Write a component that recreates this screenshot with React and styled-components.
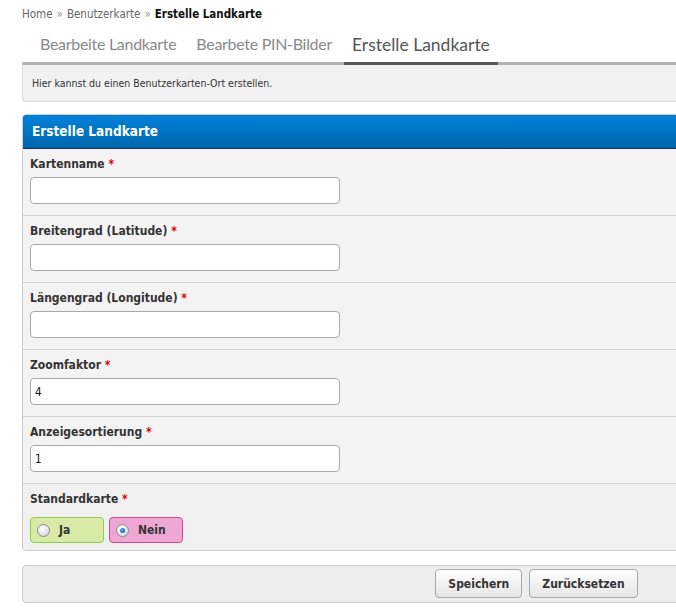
import styled, { createGlobalStyle } from 'styled-components';

const GlobalStyle = createGlobalStyle`
    html, body {
        margin: 0;
        padding: 0;
        background: #fff;
        overflow: hidden;
    }
    body {
        font-family: "DejaVu Sans Condensed", "DejaVu Sans", sans-serif;
        font-size: 11px;
        color: #333;
    }
`;

const Page = styled.div`
    padding: 6px 0 0 22px;
    width: 1029px;
`;
const Breadcrumb = styled.div`
    font-size: 11.5px;
    color: #666;
    height: 16px;
    line-height: 16px;
`;
const Crumb = styled.span`
    color: ${(p) => (p.$current ? '#111' : '#666')};
    font-weight: ${(p) => (p.$current ? 'bold' : 'normal')};
`;
const Sep = styled.span`
    color: #999;
    margin: 0 4px;
`;
const Tabs = styled.div`
    display: flex;
    align-items: flex-end;
    gap: 4px;
    padding-left: 10px;
    height: 40px;
`;
const Tab = styled.div`
    font-family: Lato, "Open Sans", sans-serif;
    font-size: ${(p) => (p.$active ? '17.5px' : '16px')};
    letter-spacing: ${(p) => (p.$active ? '0' : '-0.3px')};
    line-height: 20px;
    color: ${(p) => (p.$active ? '#555' : '#8a8a8a')};
    padding: 0 8px ${(p) => (p.$active ? '7px' : '8px')};
    border-bottom: 3px solid ${(p) => (p.$active ? '#555' : 'transparent')};
    margin-bottom: -3px;
    position: relative;
    z-index: 1;
`;
const InfoBox = styled.div`
    background: #f1f1f1;
    border: 1px solid #ddd;
    border-top: 3px solid #b3b3b3;
    border-radius: 0 0 4px 4px;
    padding: 12px 9px 12px;
    font-size: 10.5px;
    color: #333;
`;
const Panel = styled.div`
    margin-top: 12px;
    border: 1px solid #ccc;
    border-radius: 4px;
    overflow: hidden;
    background: #f3f3f3;
`;
const PanelHeader = styled.div`
    background: linear-gradient(#0082da, #0066ad);
    border-bottom: 1px solid #1d3550;
    color: #fff;
    font-weight: bold;
    font-size: 13.5px;
    height: 33px;
    line-height: 33px;
    padding-left: 9px;
`;
const Row = styled.div`
    padding: 8px 7px ${(p) => (p.$last ? '7px' : '11px')};
    border-bottom: ${(p) => (p.$last ? 'none' : '1px solid #d2d2d2')};
    background: ${(p) => (p.$last ? '#f0f0f0' : '#f3f3f3')};
`;
const Label = styled.div`
    font-weight: bold;
    font-size: 12px;
    color: #333;
    height: 14px;
    line-height: 14px;
    margin-bottom: 6px;
`;
const Req = styled.span`
    color: #d00;
`;
const Input = styled.input`
    display: block;
    box-sizing: border-box;
    width: 310px;
    height: 27px;
    border: 1px solid #a9a9a9;
    border-radius: 4px;
    background: #fff;
    padding: 0 4px;
    font-family: inherit;
    font-size: 11.5px;
    color: #111;
    outline: none;
`;
const Choices = styled.div`
    display: flex;
    gap: 5px;
    margin-top: 11px;
`;
const Choice = styled.label`
    box-sizing: border-box;
    width: 74px;
    height: 26px;
    display: flex;
    align-items: center;
    gap: 9px;
    padding-left: 6px;
    border-radius: 4px;
    border: 1px solid ${(p) => (p.$tone === 'green' ? '#91cc52' : '#d2478f')};
    background: ${(p) => (p.$tone === 'green' ? '#d7eba7' : '#eea6d5')};
    font-weight: bold;
    font-size: 12px;
    color: #333;
`;
const Radio = styled.span`
    width: 11px;
    height: 11px;
    border-radius: 50%;
    border: 1px solid #8a8a8a;
    background: radial-gradient(circle at 40% 35%, #fff, #cfcfcf);
    display: flex;
    align-items: center;
    justify-content: center;
    &::after {
        content: '';
        display: ${(p) => (p.$checked ? 'block' : 'none')};
        width: 5px;
        height: 5px;
        border-radius: 50%;
        background: radial-gradient(circle at 40% 35%, #4fb3ff, #0a4d8a);
    }
`;
const ButtonBar = styled.div`
    margin-top: 14px;
    background: #eeeeee;
    border: 1px solid #cfcfcf;
    border-radius: 4px;
    padding: 3px 0 4px;
    display: flex;
    justify-content: center;
    gap: 7px;
`;
const Button = styled.button`
    height: 29px;
    padding: 0 12px;
    border: 1px solid #a8a8a8;
    border-radius: 4px;
    background: linear-gradient(#fdfdfd, #e6e6e6);
    font-family: inherit;
    font-weight: bold;
    font-size: 12px;
    color: #333;
`;

const fields = [
  { label: 'Kartenname', value: '' },
  { label: 'Breitengrad (Latitude)', value: '' },
  { label: 'Längengrad (Longitude)', value: '' },
  { label: 'Zoomfaktor', value: '4' },
  { label: 'Anzeigesortierung', value: '1' },
];

const App = () => {
  return (
    <Page>
        <GlobalStyle />
        <Breadcrumb>
            <Crumb>Home</Crumb><Sep>»</Sep>
            <Crumb>Benutzerkarte</Crumb><Sep>»</Sep>
            <Crumb $current>Erstelle Landkarte</Crumb>
        </Breadcrumb>
        <Tabs>
            <Tab>Bearbeite Landkarte</Tab>
            <Tab>Bearbete PIN-Bilder</Tab>
            <Tab $active>Erstelle Landkarte</Tab>
        </Tabs>
        <InfoBox>Hier kannst du einen Benutzerkarten-Ort erstellen.</InfoBox>
        <Panel>
            <PanelHeader>Erstelle Landkarte</PanelHeader>
            {fields.map((f) => (
              <Row key={f.label}>
                  <Label>{f.label} <Req>*</Req></Label>
                  <Input defaultValue={f.value} />
              </Row>
            ))}
            <Row $last>
                <Label>Standardkarte <Req>*</Req></Label>
                <Choices>
                    <Choice $tone='green'><Radio />Ja</Choice>
                    <Choice $tone='pink'><Radio $checked />Nein</Choice>
                </Choices>
            </Row>
        </Panel>
        <ButtonBar>
            <Button>Speichern</Button>
            <Button>Zurücksetzen</Button>
        </ButtonBar>
    </Page>
  );
};

export default App;
